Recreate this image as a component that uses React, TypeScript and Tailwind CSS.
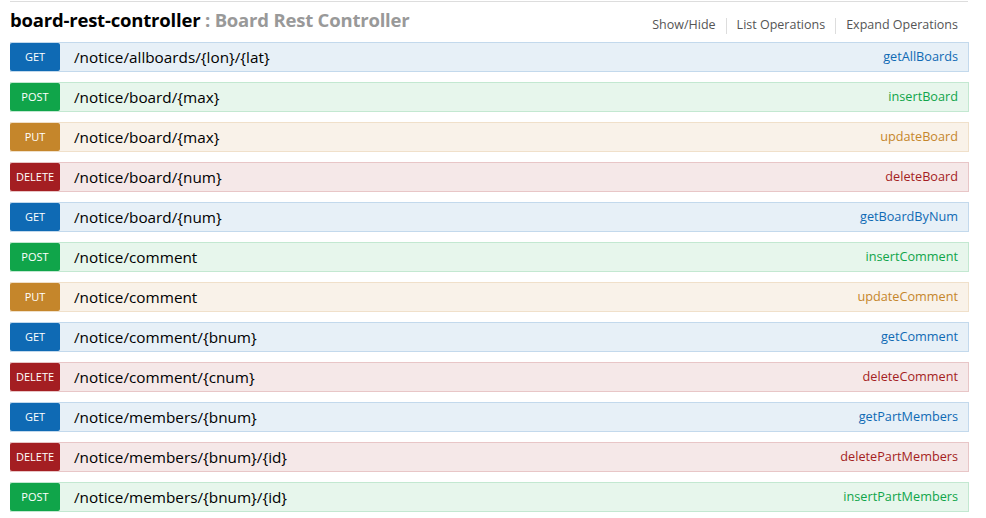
import React from "react";

type M = "GET" | "POST" | "PUT" | "DELETE";

const styles: Record<M, { row: string; badge: string; text: string }> = {
  GET: { row: "bg-[#e7f0f7] border-[#c3d9ec]", badge: "bg-[#0f6ab4]", text: "text-[#0f6ab4]" },
  POST: { row: "bg-[#e7f6ec] border-[#c3e8d1]", badge: "bg-[#10a54a]", text: "text-[#10a54a]" },
  PUT: { row: "bg-[#f9f2e9] border-[#f0e0ca]", badge: "bg-[#c5862b]", text: "text-[#c5862b]" },
  DELETE: { row: "bg-[#f5e8e8] border-[#e8c6c7]", badge: "bg-[#a41e22]", text: "text-[#a41e22]" },
};

const ops: [M, string, string][] = [
  ["GET", "/notice/allboards/{lon}/{lat}", "getAllBoards"],
  ["POST", "/notice/board/{max}", "insertBoard"],
  ["PUT", "/notice/board/{max}", "updateBoard"],
  ["DELETE", "/notice/board/{num}", "deleteBoard"],
  ["GET", "/notice/board/{num}", "getBoardByNum"],
  ["POST", "/notice/comment", "insertComment"],
  ["PUT", "/notice/comment", "updateComment"],
  ["GET", "/notice/comment/{bnum}", "getComment"],
  ["DELETE", "/notice/comment/{cnum}", "deleteComment"],
  ["GET", "/notice/members/{bnum}", "getPartMembers"],
  ["DELETE", "/notice/members/{bnum}/{id}", "deletePartMembers"],
  ["POST", "/notice/members/{bnum}/{id}", "insertPartMembers"],
];

export default function App() {
  return (
    <div className="w-[986px] h-[518px] bg-white overflow-hidden" style={{ fontFamily: '"Open Sans", "Noto Sans", sans-serif' }}>
      <div className="ml-[10px] w-[959px]">
        <div className="mt-[1px] border-t border-[#dddddd] w-[958px]" />
        <div className="flex items-center justify-between h-[39px]">
          <div className="text-[18.5px] font-bold leading-none text-black tracking-[-0.2px] -mt-[2px]">
            board-rest-controller
            <span className="text-[#999999]"> : Board Rest Controller</span>
          </div>
          <div className="flex items-center text-[12.5px] text-[#555555] pr-[11px] pt-[8px]">
            <span className="pr-[10px]">Show/Hide</span>
            <span className="h-[16px] border-l border-[#dddddd]" />
            <span className="px-[10px]">List Operations</span>
            <span className="h-[16px] border-l border-[#dddddd]" />
            <span className="pl-[10px]">Expand Operations</span>
          </div>
        </div>
        <div className="flex flex-col gap-[10px] mt-[1px]">
          {ops.map(([m, path, name], i) => {
            const s = styles[m];
            return (
              <div key={i} className={`h-[30px] border ${s.row} flex items-center`}>
                <div
                  className={`${s.badge} w-[50px] h-[28px] rounded-[2px] flex items-center justify-center text-white text-[11px] -ml-px`}
                >
                  {m}
                </div>
                <div className="ml-[14px] text-[15.3px] text-black">{path}</div>
                <div className={`ml-auto pr-[10px] text-[12.7px] ${s.text}`}>{name}</div>
              </div>
            );
          })}
        </div>
      </div>
    </div>
  );
}
